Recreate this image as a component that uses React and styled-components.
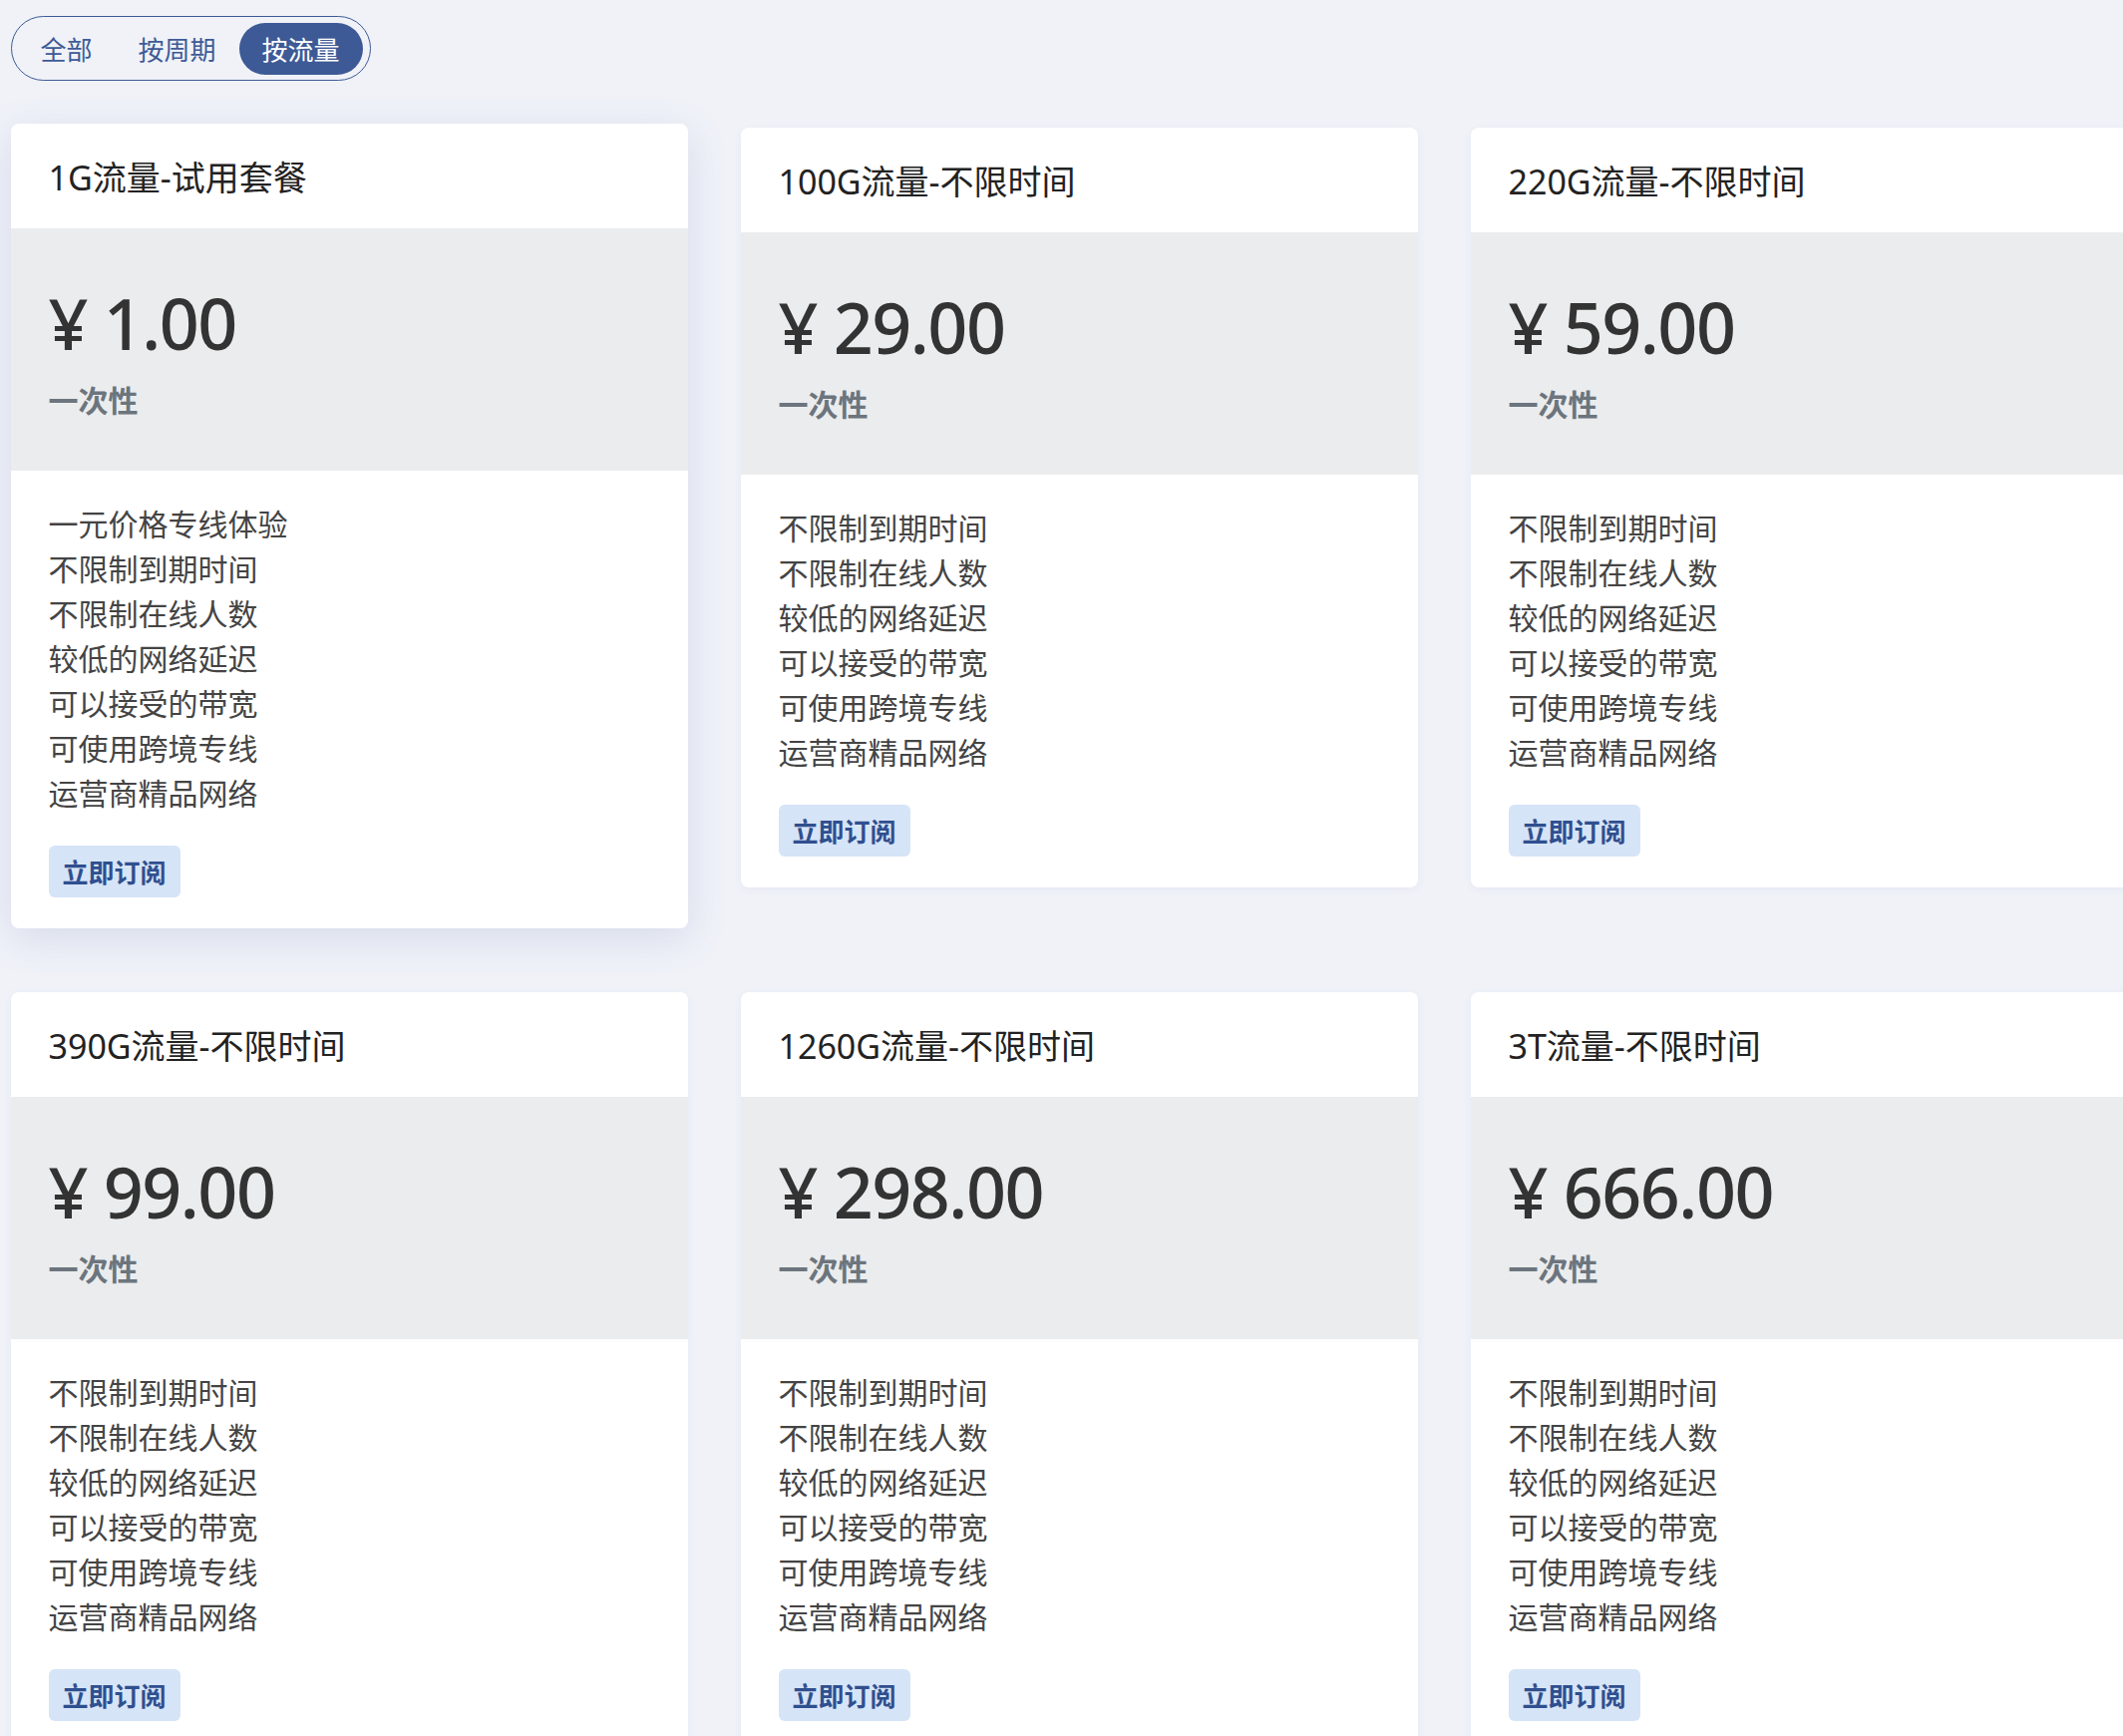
import React from "react";
import styled, { createGlobalStyle } from "styled-components";

const GlobalStyle = createGlobalStyle`
  html, body {
    margin: 0;
    padding: 0;
    background: #f0f2f8;
    overflow: hidden;
  }
  body {
    font-family: "Noto Sans", "Noto Sans CJK SC", sans-serif;
    color: #212529;
  }
  * {
    box-sizing: border-box;
  }
`;

const Page = styled.div`
  padding: 16px 0 0 11px;
  width: 2200px;
`;

const Toggle = styled.div`
  display: inline-flex;
  align-items: center;
  border: 1.5px solid #3d5a96;
  border-radius: 999px;
  padding: 5.5px 7.5px 5.5px 5.5px;
`;

const ToggleItem = styled.div`
  height: 52px;
  padding: 0 23px;
  display: flex;
  align-items: center;
  font-size: 26px;
  border-radius: 26px;
  color: ${(props) => (props.active ? "#ffffff" : "#3d5a96")};
  background: ${(props) => (props.active ? "#3d5a96" : "transparent")};
`;

const Grid = styled.div`
  display: grid;
  grid-template-columns: repeat(3, 679px);
  column-gap: 53px;
  row-gap: 60px;
  align-items: start;
  margin-top: 47px;
`;

const Card = styled.div`
  background: #ffffff;
  border-radius: 8px;
  overflow: hidden;
  box-shadow: ${(props) =>
    props.raised
      ? "0 10px 40px rgba(80, 100, 170, 0.16)"
      : "0 2px 8px rgba(80, 100, 170, 0.06)"};
  transform: ${(props) => (props.raised ? "translateY(-4px)" : "none")};
`;

const Header = styled.div`
  height: 105px;
  padding: 0 37.5px;
  display: flex;
  align-items: center;
  font-size: 34px;
  color: #222;
`;

const PriceBox = styled.div`
  background: #ebeced;
  padding: 50px 37.5px 48px;
`;

const Price = styled.div`
  font-size: 70px;
  line-height: 90px;
  font-weight: 500;
  letter-spacing: -1.5px;
  color: #333;
`;

const Period = styled.div`
  margin-top: 10px;
  font-size: 30px;
  line-height: 45px;
  font-weight: 700;
  color: #6c757d;
`;

const Body = styled.div`
  padding: 31px 37.5px;
`;

const Features = styled.ul`
  list-style: none;
  margin: 0 0 30px;
  padding: 0;
`;

const Feature = styled.li`
  font-size: 30px;
  line-height: 45px;
  color: #444;
`;

const Button = styled.button`
  height: 52px;
  padding: 0 14px;
  border: none;
  border-radius: 6px;
  background: #d6e4f7;
  color: #2f4f8f;
  font-family: inherit;
  font-size: 26px;
  font-weight: 700;
  cursor: pointer;
`;

const common = [
  "不限制到期时间",
  "不限制在线人数",
  "较低的网络延迟",
  "可以接受的带宽",
  "可使用跨境专线",
  "运营商精品网络",
];

const plans = [
  { title: "1G流量-试用套餐", price: "1.00", features: ["一元价格专线体验", ...common] },
  { title: "100G流量-不限时间", price: "29.00", features: common },
  { title: "220G流量-不限时间", price: "59.00", features: common },
  { title: "390G流量-不限时间", price: "99.00", features: common },
  { title: "1260G流量-不限时间", price: "298.00", features: common },
  { title: "3T流量-不限时间", price: "666.00", features: common },
];

const tabs = ["全部", "按周期", "按流量"];

const App = () => {
  return (
    <>
      <GlobalStyle />
      <Page>
        <Toggle>
          {tabs.map((t) => (
            <ToggleItem key={t} active={t === "按流量"}>
              {t}
            </ToggleItem>
          ))}
        </Toggle>
        <Grid>
          {plans.map((p, i) => (
            <Card key={p.title} raised={i === 0}>
              <Header>{p.title}</Header>
              <PriceBox>
                <Price>¥ {p.price}</Price>
                <Period>一次性</Period>
              </PriceBox>
              <Body>
                <Features>
                  {p.features.map((f) => (
                    <Feature key={f}>{f}</Feature>
                  ))}
                </Features>
                <Button>立即订阅</Button>
              </Body>
            </Card>
          ))}
        </Grid>
      </Page>
    </>
  );
};

export default App;
